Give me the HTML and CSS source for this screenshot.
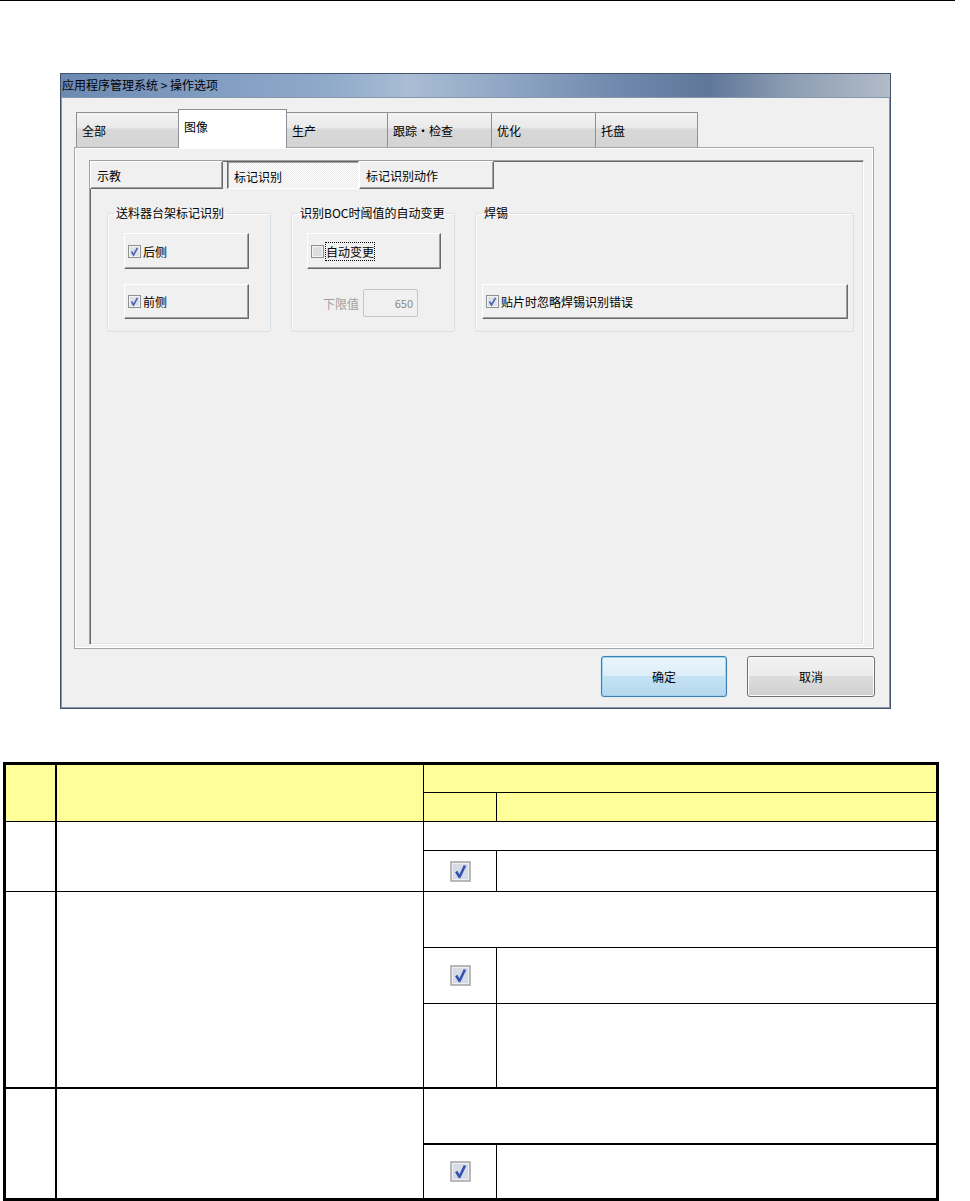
FILE: index.html
```html
<!DOCTYPE html>
<html lang="zh-CN">
<head>
    <meta charset="UTF-8">
    <title>操作选项</title>
    <link rel="stylesheet" href="styles.css">
</head>
<body>
    <div class="topline"></div>

    <div class="dialog">
        <div class="titlebar">应用程序管理系统 &gt; 操作选项</div>
        <div class="client">
            <!-- main tabs -->
            <div class="tabs">
                <div class="tab w102">全部</div>
                <div class="tab active w108">图像</div>
                <div class="tab w101">生产</div>
                <div class="tab w104">跟踪・检查</div>
                <div class="tab w104">优化</div>
                <div class="tab w102">托盘</div>
            </div>
            <div class="panel">
                <div class="subpanel">
                    <div class="subtabs">
                        <div class="subtab st-first">示教</div>
                        <div class="subtab pressed">标记识别</div>
                        <div class="subtab st-last">标记识别动作</div>
                    </div>

                    <div class="groups">
                        <fieldset class="group g-small">
                            <legend>送料器台架标记识别</legend>
                            <div class="opt opt-feeder">
                                <svg class="cb" width="13" height="13" viewBox="0 0 13 13"><rect x="0.5" y="0.5" width="12" height="12" fill="#f4f4f4" stroke="#8e8f8f"/><rect x="2" y="2" width="9" height="9" fill="#dde0e6"/><path d="M3.5 6.5 L5.5 10 L9.5 2.8" fill="none" stroke="#4b63b6" stroke-width="1.6"/></svg>
                                <span>后侧</span>
                            </div>
                            <div class="opt opt-feeder opt-second">
                                <svg class="cb" width="13" height="13" viewBox="0 0 13 13"><rect x="0.5" y="0.5" width="12" height="12" fill="#f4f4f4" stroke="#8e8f8f"/><rect x="2" y="2" width="9" height="9" fill="#dde0e6"/><path d="M3.5 6.5 L5.5 10 L9.5 2.8" fill="none" stroke="#4b63b6" stroke-width="1.6"/></svg>
                                <span>前侧</span>
                            </div>
                        </fieldset>

                        <fieldset class="group g-small">
                            <legend>识别BOC时阈值的自动变更</legend>
                            <div class="opt opt-auto">
                                <svg class="cb" width="13" height="13" viewBox="0 0 13 13"><rect x="0.5" y="0.5" width="12" height="12" fill="#f4f4f4" stroke="#8e8f8f"/><rect x="2" y="2" width="9" height="9" fill="#dcdee2"/></svg>
                                <span class="focus">自动变更</span>
                            </div>
                            <div class="limit">
                                <span class="limit-label">下限值</span>
                                <div class="limit-box">650</div>
                            </div>
                        </fieldset>

                        <fieldset class="group g-wide">
                            <legend>焊锡</legend>
                            <div class="opt opt-solder">
                                <svg class="cb" width="13" height="13" viewBox="0 0 13 13"><rect x="0.5" y="0.5" width="12" height="12" fill="#f4f4f4" stroke="#8e8f8f"/><rect x="2" y="2" width="9" height="9" fill="#dde0e6"/><path d="M3.5 6.5 L5.5 10 L9.5 2.8" fill="none" stroke="#4b63b6" stroke-width="1.6"/></svg>
                                <span>贴片时忽略焊锡识别错误</span>
                            </div>
                        </fieldset>
                    </div>
                </div>
            </div>

            <div class="actions">
                <button class="btn btn-ok">确定</button>
                <button class="btn">取消</button>
            </div>
        </div>
    </div>

    <table class="spec">
        <colgroup>
            <col class="col-no">
            <col class="col-item">
            <col class="col-chk">
            <col class="col-desc">
        </colgroup>
        <tr class="h30">
            <th rowspan="2" class="c-no"></th>
            <th rowspan="2"></th>
            <th colspan="2"></th>
        </tr>
        <tr class="h29">
            <th></th>
            <th></th>
        </tr>

        <tr class="h29">
            <td rowspan="2" class="c-no"></td>
            <td rowspan="2"></td>
            <td colspan="2"></td>
        </tr>
        <tr class="h41">
            <td class="chk"><svg width="21" height="21" viewBox="0 0 21 21"><rect x="1" y="1" width="19" height="19" fill="#eceef2" stroke="#a4a4a4" stroke-width="1.5"/><rect x="3" y="3" width="15" height="15" fill="#d7dbe5"/><path d="M6.2 10.5 L9.5 16 L15 4.5" fill="none" stroke="#3453b2" stroke-width="2.6" stroke-linejoin="round"/></svg></td>
            <td></td>
        </tr>

        <tr class="h56">
            <td rowspan="3" class="c-no sect-end"></td>
            <td rowspan="3" class="sect-end"></td>
            <td colspan="2"></td>
        </tr>
        <tr class="h56">
            <td class="chk"><svg width="21" height="21" viewBox="0 0 21 21"><rect x="1" y="1" width="19" height="19" fill="#eceef2" stroke="#a4a4a4" stroke-width="1.5"/><rect x="3" y="3" width="15" height="15" fill="#d7dbe5"/><path d="M6.2 10.5 L9.5 16 L15 4.5" fill="none" stroke="#3453b2" stroke-width="2.6" stroke-linejoin="round"/></svg></td>
            <td></td>
        </tr>
        <tr class="h84">
            <td class="sect-end"></td>
            <td class="sect-end"></td>
        </tr>

        <tr class="h56">
            <td rowspan="2" class="c-no"></td>
            <td rowspan="2"></td>
            <td colspan="2" class="sect-end"></td>
        </tr>
        <tr class="h57">
            <td class="chk"><svg width="21" height="21" viewBox="0 0 21 21"><rect x="1" y="1" width="19" height="19" fill="#eceef2" stroke="#a4a4a4" stroke-width="1.5"/><rect x="3" y="3" width="15" height="15" fill="#d7dbe5"/><path d="M6.2 10.5 L9.5 16 L15 4.5" fill="none" stroke="#3453b2" stroke-width="2.6" stroke-linejoin="round"/></svg></td>
            <td></td>
        </tr>
    </table>
</body>
</html>
```

FILE: styles.css
```css
body {
    margin: 0;
    background: #fff;
    font-family: "Noto Sans CJK SC", "Liberation Sans", sans-serif;
    font-size: 12px;
    color: #000;
}
.topline {
    width: 955px;
    height: 1px;
    background: #000;
}

/* dialog window */
.dialog {
    margin: 72px 0 0 60px;
    width: 831px;
    height: 636px;
    box-sizing: border-box;
    border: 1px solid #42536b;
    display: flex;
    flex-direction: column;
}
.titlebar {
    height: 23px;
    line-height: 22px;
    padding-left: 1px;
    font-size: 12px;
    background: linear-gradient(90deg, #6c89b1 0%, #819dc2 18%, #8fa9c9 32%, #a9bdd4 42%, #8ca3c2 55%, #6f87ab 68%, #5f7799 78%, #8d9db3 88%, #b1bcc9 100%);
}
.client {
    flex: 1;
    background: #f0f0f0;
    border: 1px solid #8798ae;
    padding: 11px 14px 0 12px;
}

/* main tabs */
.tabs {
    display: flex;
    align-items: flex-end;
    height: 38px;
    margin-left: 2px;
}
.tab {
    height: 35px;
    box-sizing: border-box;
    border: 1px solid #8d9098;
    border-bottom: none;
    margin-right: -1px;
    padding: 9px 0 0 5px;
    background: linear-gradient(#f3f3f3, #e9e9e9 45%, #d9d9d9 46%, #d3d3d3);
}
.tab.active {
    height: 39px;
    margin-bottom: -1px;
    padding-top: 8px;
    background: #fff;
    position: relative;
    z-index: 1;
}
.w101 { width: 102px; }
.w102 { width: 103px; }
.w104 { width: 105px; }
.w108 { width: 109px; }

.panel {
    width: 800px;
    height: 502px;
    box-sizing: border-box;
    border: 1px solid #a3a6ac;
    box-shadow: inset 1px 1px 0 #fff, inset -1px -1px 0 #fff;
    padding: 12px 0 0 14px;
}
.subpanel {
    width: 775px;
    height: 485px;
    box-sizing: border-box;
    border-top: 1px solid #a0a0a0;
    border-left: 1px solid #a0a0a0;
    border-right: 1px solid #fff;
    border-bottom: 1px solid #fff;
    box-shadow: inset 1px 1px 0 #696969, inset -1px -1px 0 #e3e3e3;
}

/* sub tabs, drawn as toggle buttons */
.subtabs {
    display: flex;
    height: 28px;
}
.subtab {
    box-sizing: border-box;
    height: 28px;
    padding: 5px 0 0 6px;
    border-top: 1px solid #fff;
    border-left: 1px solid #fff;
    border-right: 1px solid #696969;
    border-bottom: 1px solid #696969;
    box-shadow: inset -1px -1px 0 #a0a0a0;
    background: #f0f0f0;
}
.st-first { width: 133px; margin-right: 4px; }
.pressed {
    width: 132px;
    padding-top: 6px;
    border-top-color: #696969;
    border-left-color: #696969;
    border-right-color: #fff;
    border-bottom-color: #fff;
    box-shadow: inset 1px 1px 0 #a0a0a0;
    background: repeating-conic-gradient(#fdfdfd 0 25%, #ececec 0 50%) 0 0 / 2px 2px;
}
.st-last { width: 135px; }

/* group boxes */
.groups {
    display: flex;
    gap: 20px;
    margin: 16px 0 0 17px;
}
.group {
    margin: 0;
    padding: 12px 0 0 0;
    height: 127px;
    box-sizing: border-box;
    border: 1px solid #d5dfe5;
    border-radius: 3px;
    box-shadow: inset 1px 1px 0 #fff;
}
.group legend {
    margin-left: 6px;
    padding: 0 2px;
    font-size: 12px;
    line-height: 16px;
}
.g-small { width: 164px; }
.g-wide { width: 379px; }

.opt {
    display: flex;
    align-items: center;
    box-sizing: border-box;
    height: 36px;
    padding-left: 3px;
    border-top: 1px solid #fff;
    border-left: 1px solid #fff;
    border-right: 1px solid #696969;
    border-bottom: 1px solid #696969;
    box-shadow: inset -1px -1px 0 #a0a0a0;
    background: #f0f0f0;
    font-size: 12px;
}
.cb {
    margin-right: 2px;
    flex: none;
}
.opt-feeder { width: 125px; margin-left: 16px; }
.opt-second { height: 35px; margin-top: 15px; }
.opt-auto { width: 134px; margin-left: 15px; }
.opt-solder { width: 366px; height: 35px; margin: 51px 0 0 6px; }
.focus {
    outline: 1px dotted #000;
    outline-offset: 0;
}

.limit {
    display: flex;
    align-items: center;
    margin: 20px 0 0 31px;
}
.limit-label {
    color: #a0a0a0;
    width: 40px;
}
.limit-box {
    width: 55px;
    height: 28px;
    box-sizing: border-box;
    border: 1px solid #c5c5c5;
    border-radius: 2px;
    background: #f0f0f0;
    color: #8a8a8a;
    font-size: 11px;
    text-align: right;
    padding: 5px 4px 0 0;
}

/* bottom buttons */
.actions {
    display: flex;
    justify-content: flex-end;
    gap: 20px;
    margin-top: 7px;
}
.btn {
    width: 128px;
    height: 41px;
    border: 1px solid #707070;
    border-radius: 3px;
    background: linear-gradient(#f2f2f2, #ebebeb 48%, #dddddd 50%, #cfcfcf);
    box-shadow: inset 0 0 0 1px #fcfcfc;
    font-family: "Noto Sans CJK SC", sans-serif;
    font-size: 12px;
    color: #000;
    padding: 0;
}
.btn-ok {
    width: 126px;
    border-color: #3c7fb1;
    background: linear-gradient(#eaf5fc, #dceef9 48%, #c4e2f3 50%, #b6d9ee);
    box-shadow: inset 0 0 0 1px #9fd5f3, 0 0 1px #6cc3ef;
}

/* spec table */
.spec {
    border-collapse: collapse;
    table-layout: fixed;
    margin: 53px 0 0 3px;
    border: 3px solid #000;
}
.col-no { width: 51px; }
.col-item { width: 368px; }
.col-chk { width: 73px; }
.col-desc { width: 441px; }
.spec th,
.spec td {
    border: 1px solid #000;
    padding: 0;
}
.spec th {
    background: #ffff99;
}
.spec .c-no {
    border-right: 2px solid #000;
}
.spec .sect-end {
    border-bottom: 2px solid #000;
}
.chk {
    text-align: center;
    vertical-align: middle;
    line-height: 0;
}
.h29 { height: 29px; }
.h30 { height: 29px; }
.h41 { height: 41px; }
.h56 { height: 56px; }
.h57 { height: 56px; }
.h84 { height: 84px; }
```
